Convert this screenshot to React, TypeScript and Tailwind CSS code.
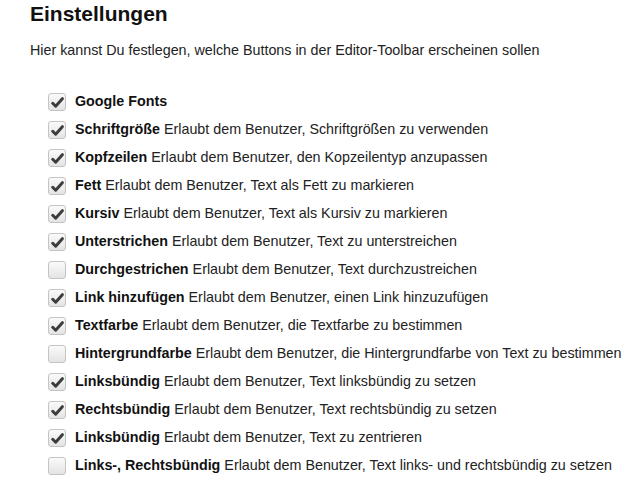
import React from 'react';

type Option = {
  label: string;
  description?: string;
  checked: boolean;
};

const options: Option[] = [
  { label: 'Google Fonts', checked: true },
  { label: 'Schriftgröße', description: 'Erlaubt dem Benutzer, Schriftgrößen zu verwenden', checked: true },
  { label: 'Kopfzeilen', description: 'Erlaubt dem Benutzer, den Kopzeilentyp anzupassen', checked: true },
  { label: 'Fett', description: 'Erlaubt dem Benutzer, Text als Fett zu markieren', checked: true },
  { label: 'Kursiv', description: 'Erlaubt dem Benutzer, Text als Kursiv zu markieren', checked: true },
  { label: 'Unterstrichen', description: 'Erlaubt dem Benutzer, Text zu unterstreichen', checked: true },
  { label: 'Durchgestrichen', description: 'Erlaubt dem Benutzer, Text durchzustreichen', checked: false },
  { label: 'Link hinzufügen', description: 'Erlaubt dem Benutzer, einen Link hinzuzufügen', checked: true },
  { label: 'Textfarbe', description: 'Erlaubt dem Benutzer, die Textfarbe zu bestimmen', checked: true },
  { label: 'Hintergrundfarbe', description: 'Erlaubt dem Benutzer, die Hintergrundfarbe von Text zu bestimmen', checked: false },
  { label: 'Linksbündig', description: 'Erlaubt dem Benutzer, Text linksbündig zu setzen', checked: true },
  { label: 'Rechtsbündig', description: 'Erlaubt dem Benutzer, Text rechtsbündig zu setzen', checked: true },
  { label: 'Linksbündig', description: 'Erlaubt dem Benutzer, Text zu zentrieren', checked: true },
  { label: 'Links-, Rechtsbündig', description: 'Erlaubt dem Benutzer, Text links- und rechtsbündig zu setzen', checked: false },
];

const CheckBox: React.FC<{ checked: boolean }> = ({ checked }) => (
  <span className="flex h-[18px] w-[18px] shrink-0 items-center justify-center rounded-[3px] border border-[#c4c4c4] bg-gradient-to-b from-[#fafafa] to-[#e4e4e4]">
    {checked && (
      <svg width="13" height="11" viewBox="0 0 14 12">
        <path d="M1.8 6.8 L5 10 L12.3 1.8" fill="none" stroke="#3c3c3c" strokeWidth="3.2" strokeLinecap="round" strokeLinejoin="round" />
      </svg>
    )}
  </span>
);

export default function App() {
  return (
    <div className="h-[480px] w-[640px] overflow-hidden bg-white pl-[30px] text-[#222] [font-family:'Liberation_Sans',Arial,sans-serif]">
      {/* Title */}
      <h1 className="pt-[2px] text-[21px] font-bold leading-[24px] text-[#111]">Einstellungen</h1>

      <p className="mt-[15px] text-[14.3px] leading-[18px]">
        Hier kannst Du festlegen, welche Buttons in der Editor-Toolbar erscheinen sollen
      </p>

      {/* Options */}
      <ul className="mt-[29px] flex flex-col pl-[18px]">
        {options.map((option, i) => (
          <li key={i} className="flex h-[28px] items-center gap-[9px] text-[14.3px]">
            <CheckBox checked={option.checked} />
            <span className="whitespace-nowrap">
              <b className="font-bold text-[#111]">{option.label}</b>
              {option.description && ' '}
              {option.description}
            </span>
          </li>
        ))}
      </ul>
    </div>
  );
}
